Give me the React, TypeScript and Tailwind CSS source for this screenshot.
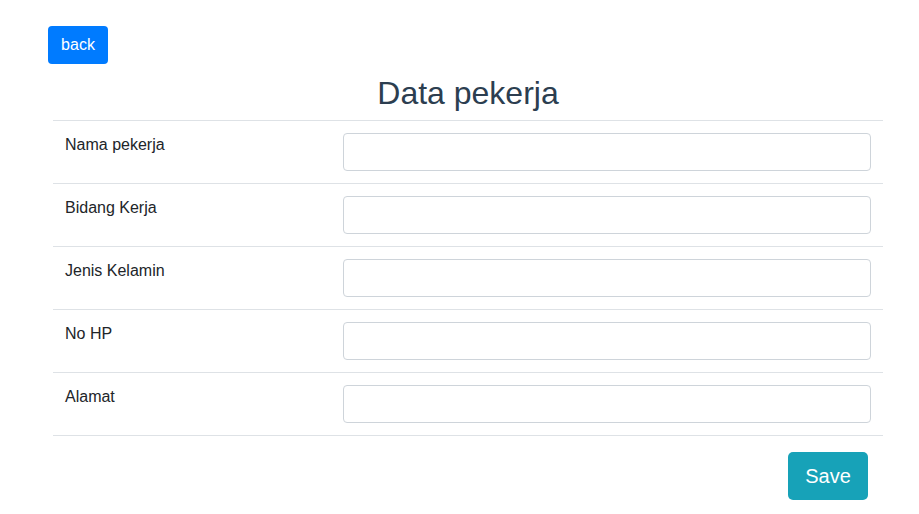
import React from "react";

const fields = ["Nama pekerja", "Bidang Kerja", "Jenis Kelamin", "No HP", "Alamat"];

export default function App() {
  return (
    <div className="min-h-screen bg-white text-[#212529]" style={{ fontFamily: '"Liberation Sans", Arial, sans-serif' }}>
      <div className="pl-[48px] pr-[31px] pt-[26px]">
        <button className="h-[38px] w-[60px] rounded-[4px] bg-[#007bff] text-[16px] text-white">back</button>
        <h2 className="mt-[10px] mb-[8px] text-center text-[32px] leading-[38.4px] text-[#2c3e50]">Data pekerja</h2>
        <div className="ml-[5px]">
          <table className="w-[830px] border-collapse">
            <tbody>
              {fields.map((f) => (
                <tr key={f} className="border-t border-b border-[#dee2e6]">
                  <td className="w-[278px] p-[12px] align-top text-[16px] leading-[24px]">{f}</td>
                  <td className="p-[12px]">
                    <input
                      type="text"
                      className="block h-[38px] w-full rounded-[4px] border border-[#ced4da] bg-white px-[12px] text-[16px] outline-none"
                    />
                  </td>
                </tr>
              ))}
            </tbody>
          </table>
          <div className="mt-[16px] flex w-[830px] justify-end pr-[15px]">
            <button className="h-[48px] w-[80px] rounded-[5px] bg-[#17a2b8] text-[20px] text-white">Save</button>
          </div>
        </div>
      </div>
    </div>
  );
}
